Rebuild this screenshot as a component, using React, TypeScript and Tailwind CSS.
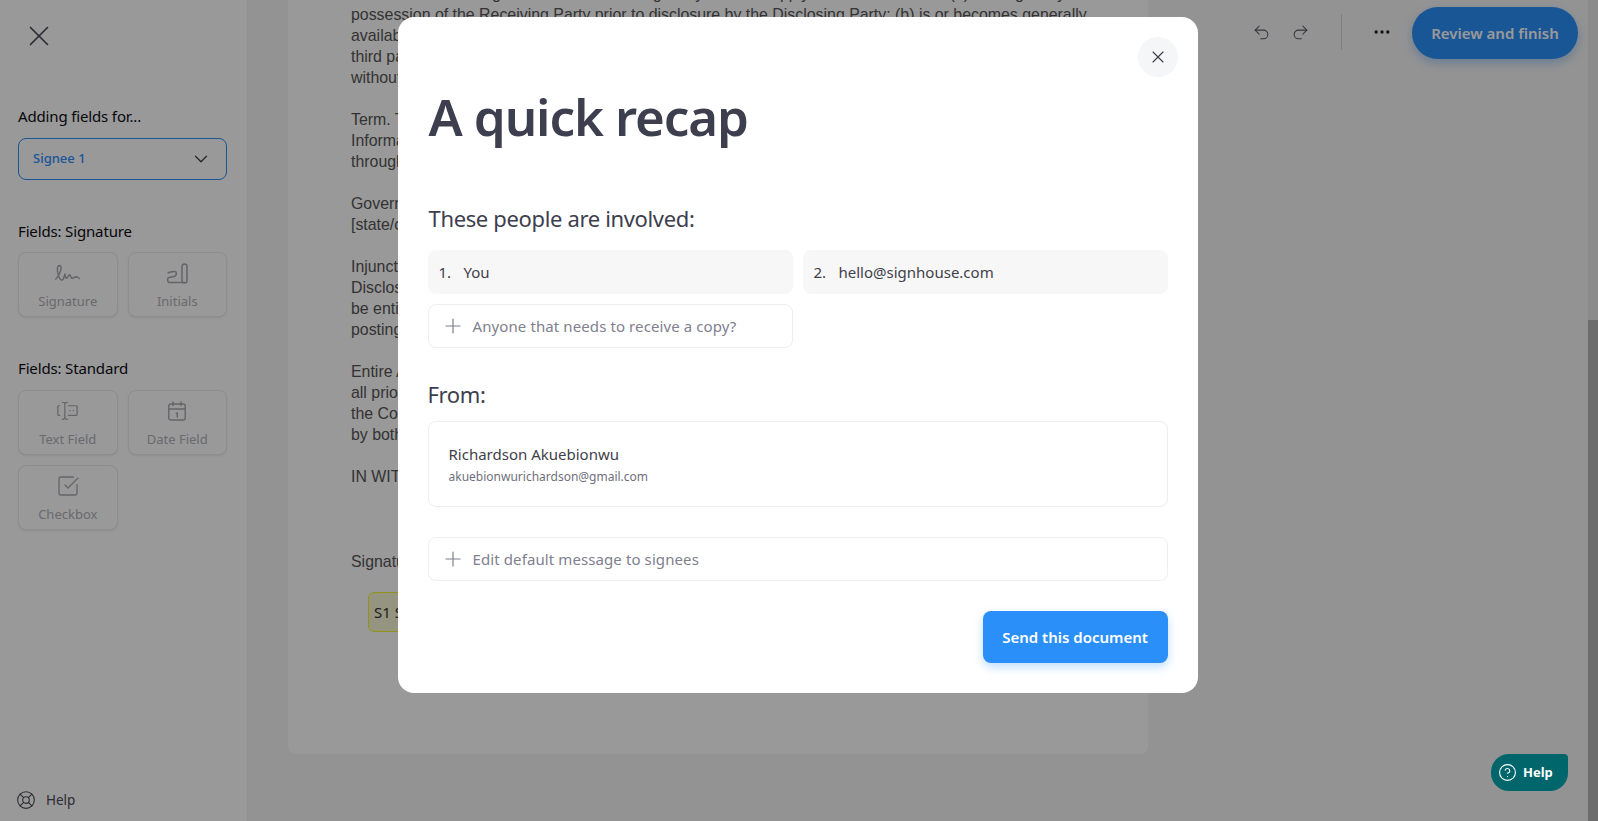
import { ChevronDown, CircleHelp, LifeBuoy, MoreHorizontal, Plus, Redo2, SquareCheckBig, Undo2, X } from "lucide-react";
import type { ReactNode } from "react";

const paragraphs = [
  [
    "Exclusions. The obligations of the Receiving Party shall not apply to information that: (a) was rightfully in the",
    "possession of the Receiving Party prior to disclosure by the Disclosing Party; (b) is or becomes generally",
    "available to the public through no fault of the Receiving Party; (c) is rightfully received from a",
    "third party without any obligation of confidentiality; or (d) is independently developed",
    "without use of the Confidential Information.",
  ],
  ["Term. This Agreement shall remain in effect for the period in which Confidential", "Information is exchanged between the parties, and the obligations continue", "through the agreed period."],
  ["Governing Law. This Agreement shall be governed by the laws of the", "[state/country]."],
  ["Injunctive Relief. The Receiving Party acknowledges that any breach may cause the", "Disclosing Party irreparable harm, and that the Disclosing Party shall", "be entitled to seek injunctive relief without the necessity of", "posting a bond."],
  ["Entire Agreement. This Agreement is the entire agreement and supersedes", "all prior agreements relating to the subject matter of", "the Confidential Information. It may be amended only in writing signed", "by both parties."],
  ["IN WITNESS WHEREOF, the parties have executed this Agreement."],
];

function SignatureIcon() {
  return (
    <svg width="25" height="18" viewBox="0 0 25 18" fill="none" stroke="currentColor" strokeWidth="1.5" strokeLinecap="round" strokeLinejoin="round">
      <path d="M.8 15C3 13 6 8 6 4 6 1 3 .5 2.5 4 2 8 4 16 7 16c2 0 2-4 3-6 .5 3 1 5 2 4s2-4 3-3 1 4 3 3 3-2 5-.5l1.500 1" />
    </svg>
  );
}

function InitialsIcon() {
  return (
    <svg width="22" height="21" viewBox="0 0 22 21" fill="none" stroke="currentColor" strokeWidth="1.5" strokeLinecap="round" strokeLinejoin="round">
      <path d="M2 10c1-1 7-2 8-1 1 2 0 4-2 4.500l-5 1c-2 .5-2 4 0 5h15" />
      <path d="M16 3.500c0-3.500 5-3.500 5 0v14.500c0 2.500-5 2.500-5 0Z" />
    </svg>
  );
}

function TextFieldIcon() {
  return (
    <svg width="21" height="20" viewBox="0 0 24 22" fill="none" stroke="currentColor" strokeWidth="1.4" strokeLinecap="round" strokeLinejoin="round">
      <path d="M3 5H2a1 1 0 0 0-1 1v9a1 1 0 0 0 1 1h1" />
      <path d="M13 5h9a1 1 0 0 1 1 1v9a1 1 0 0 1-1 1h-9" />
      <path d="M6 1c2 0 3 .500 3 2v15c0 1.500-1 2.500-3 2.500M12 1c-2 0-3 .500-3 2M9 18c0 1.500 1 2.500 3 2.500" />
      <path d="M14.500 10.500h.5M18.500 10.500h.5" />
    </svg>
  );
}

function DateIcon() {
  return (
    <svg width="18" height="20" viewBox="0 0 18 20" fill="none" stroke="currentColor" strokeWidth="1.4" strokeLinecap="round" strokeLinejoin="round">
      <rect x=".8" y="3" width="16.400" height="16" rx="2" />
      <path d="M.8 8h16.400M5 1v3.500M13 1v3.500M8.300 12.500l1-.5v4" />
    </svg>
  );
}

function FieldButton({ label, icon }: { label: string; icon: ReactNode }) {
  return (
    <div className="h-[65px] flex flex-col items-center justify-between pt-[6px] pb-[5px] border border-[#ececec] rounded-lg shadow-[0_1px_2px_rgba(0,0,0,0.08)] bg-white text-[#b0b0b8]">
      <div className="h-[28px] flex items-center justify-center text-[#a8a8b0]">{icon}</div>
      <span className="text-[13px] leading-[20px]">{label}</span>
    </div>
  );
}

function OutlineRow({ label, className }: { label: string; className: string }) {
  return (
    <div className={`h-[44px] flex items-center pl-[12px] gap-[8px] border border-[#eeeef0] rounded-lg text-[#80808e] text-[15px] tracking-[0.1px] ${className}`}>
      <Plus className="w-[24px] h-[24px] text-[#7f7f8c]" strokeWidth={1.2} />
      <span>{label}</span>
    </div>
  );
}

function PersonRow({ n, label }: { n: number; label: string }) {
  return (
    <div className="h-[44px] flex items-center px-[11px] bg-[#f7f7f7] rounded-lg text-[15px] text-[#3f3f4a]">
      <span className="w-[25px]">{n}.</span>
      <span>{label}</span>
    </div>
  );
}

export default function App() {
  return (
    <div className="relative h-screen w-full overflow-hidden flex bg-white font-['Noto_Sans',sans-serif]">
      {/* Sidebar */}
      <aside className="w-[248px] shrink-0 h-full border-r border-[#f0f0f0] flex flex-col pl-[18px] pr-[20px] pt-[19px] pb-[11px] bg-white">
        <X className="w-[34px] h-[34px] ml-[4px] text-[#4a4a55]" strokeWidth={1.2} />
        <p className="mt-[53px] text-[15px] leading-[20px] tracking-[-0.15px] text-[#0c0c14]">Adding fields for...</p>
        <div className="mt-[12px] h-[42px] flex items-center justify-between pl-[14px] pr-[14px] border border-[#2b8ffa] rounded-lg text-[#2b8ffa] text-[13px] font-medium">
          <span>Signee 1</span>
          <ChevronDown className="w-[22px] h-[22px] text-[#3a3a45]" strokeWidth={1.3} />
        </div>
        <p className="mt-[41px] text-[15px] leading-[20px] tracking-[-0.15px] text-[#0c0c14]">Fields: Signature</p>
        <div className="mt-[11px] grid grid-cols-2 gap-[10px]">
          <FieldButton label="Signature" icon={<SignatureIcon />} />
          <FieldButton label="Initials" icon={<InitialsIcon />} />
        </div>
        <p className="mt-[41px] text-[15px] leading-[20px] tracking-[-0.15px] text-[#0c0c14]">Fields: Standard</p>
        <div className="mt-[12px] grid grid-cols-2 gap-[10px]">
          <FieldButton label="Text Field" icon={<TextFieldIcon />} />
          <FieldButton label="Date Field" icon={<DateIcon />} />
          <FieldButton label="Checkbox" icon={<SquareCheckBig className="w-[24px] h-[24px]" strokeWidth={1.3} />} />
        </div>
        <div className="mt-auto -ml-[2px] flex items-center gap-[10px] text-[13.500px] text-[#4a4a55]">
          <LifeBuoy className="w-[20px] h-[20px]" strokeWidth={1.3} />
          <span>Help</span>
        </div>
      </aside>

      {/* Document area */}
      <main className="flex-1 h-full bg-[#f5f5f5] pl-[40px] overflow-hidden">
        <div className="w-[860px] h-[754px] bg-white rounded-b-lg pl-[63px] font-['Liberation_Sans',sans-serif] text-[15.900px] leading-[21px] text-[#555555] overflow-hidden">
          <div className="-mt-[17px] flex flex-col gap-[21px]">
            {paragraphs.map((lines) => (
              <p key={lines[0]}>
                {lines.map((line) => (
                  <span key={line} className="block whitespace-nowrap">
                    {line}
                  </span>
                ))}
              </p>
            ))}
            <p className="mt-[43px]">Signature:</p>
            <div className="-mt-[1px] ml-[17px] w-[200px] h-[40px] flex items-center pl-[5px] border border-[#f5f530] rounded-md bg-[#f7f7d5] font-['Noto_Sans',sans-serif] text-[15px] text-[#333]">
              S1 Signature
            </div>
          </div>
        </div>
      </main>

      {/* Top right toolbar */}
      <div className="absolute top-[7px] right-[20px] h-[52px] flex items-center">
        <Undo2 className="-mt-[2px] w-[19px] h-[19px] text-[#5a5a66]" strokeWidth={1.3} />
        <Redo2 className="-mt-[2px] ml-[20px] w-[19px] h-[19px] text-[#5a5a66]" strokeWidth={1.3} />
        <div className="-mt-[2px] ml-[31px] w-px h-[36px] bg-[#d0d0d0]" />
        <MoreHorizontal className="-mt-[2px] ml-[30px] w-[20px] h-[20px] text-[#222]" strokeWidth={2} />
        <div className="ml-[20px] h-[52px] w-[166px] rounded-full bg-[#2b8ffa] text-white text-[15px] font-semibold flex items-center justify-center shadow-[0_4px_10px_rgba(43,143,250,0.35)]">
          Review and finish
        </div>
      </div>

      {/* Scrollbar */}
      <div className="absolute top-0 right-0 bottom-0 w-[10px] bg-[#e8e8e8] flex flex-col justify-end">
        <div className="h-[501px] bg-[#b4b4b4]" />
      </div>

      {/* Modal */}
      <div className="absolute inset-0 bg-black/40 flex justify-center items-start pt-[17px] pr-[3px]">
        <div className="relative w-[800px] h-[676px] bg-white rounded-2xl px-[30px] pt-[71px]">
          <button className="absolute top-[20px] right-[20px] w-[40px] h-[40px] rounded-full bg-[#f5f6f8] flex items-center justify-center text-[#3a3a45]">
            <X className="w-[20px] h-[20px]" strokeWidth={1.3} />
          </button>
          <h1 className="ml-[1px] text-[51px] leading-[56px] tracking-[-1.1px] font-semibold text-[#3d3e4e]">A quick recap</h1>
          <h2 className="ml-[1px] mt-[60px] text-[22px] leading-[28px] tracking-[-0.35px] text-[#3d3e4e]">These people are involved:</h2>
          <div className="mt-[18px] grid grid-cols-2 gap-x-[10px] gap-y-[10px]">
            <PersonRow n={1} label="You" />
            <PersonRow n={2} label="hello@signhouse.com" />
            <OutlineRow label="Anyone that needs to receive a copy?" className="" />
          </div>
          <h2 className="mt-[32px] text-[22px] leading-[28px] tracking-[-0.35px] text-[#3d3e4e]">From:</h2>
          <div className="mt-[13px] h-[86px] flex flex-col justify-center px-[20px] border border-[#eeeef0] rounded-lg">
            <span className="text-[15px] leading-[22px] text-[#3f3f4a]">Richardson Akuebionwu</span>
            <span className="mt-[3px] text-[12px] leading-[18px] text-[#6f6f7c]">akuebionwurichardson@gmail.com</span>
          </div>
          <OutlineRow label="Edit default message to signees" className="mt-[30px]" />
          <div className="mt-[30px] flex justify-end">
            <button className="w-[185px] h-[52px] rounded-lg bg-[#2b8ffa] text-white text-[15px] font-semibold shadow-[0_4px_10px_rgba(43,143,250,0.3)]">
              Send this document
            </button>
          </div>
        </div>
      </div>

      {/* Help widget */}
      <div className="absolute left-[1491px] top-[754px] w-[77px] h-[37px] rounded-[18px] rounded-tr-[4px] bg-[#00666b] text-white text-[13px] font-bold flex items-center pl-[7px] gap-[6px]">
        <CircleHelp className="w-[19px] h-[19px]" strokeWidth={1.4} />
        <span>Help</span>
      </div>
    </div>
  );
}
